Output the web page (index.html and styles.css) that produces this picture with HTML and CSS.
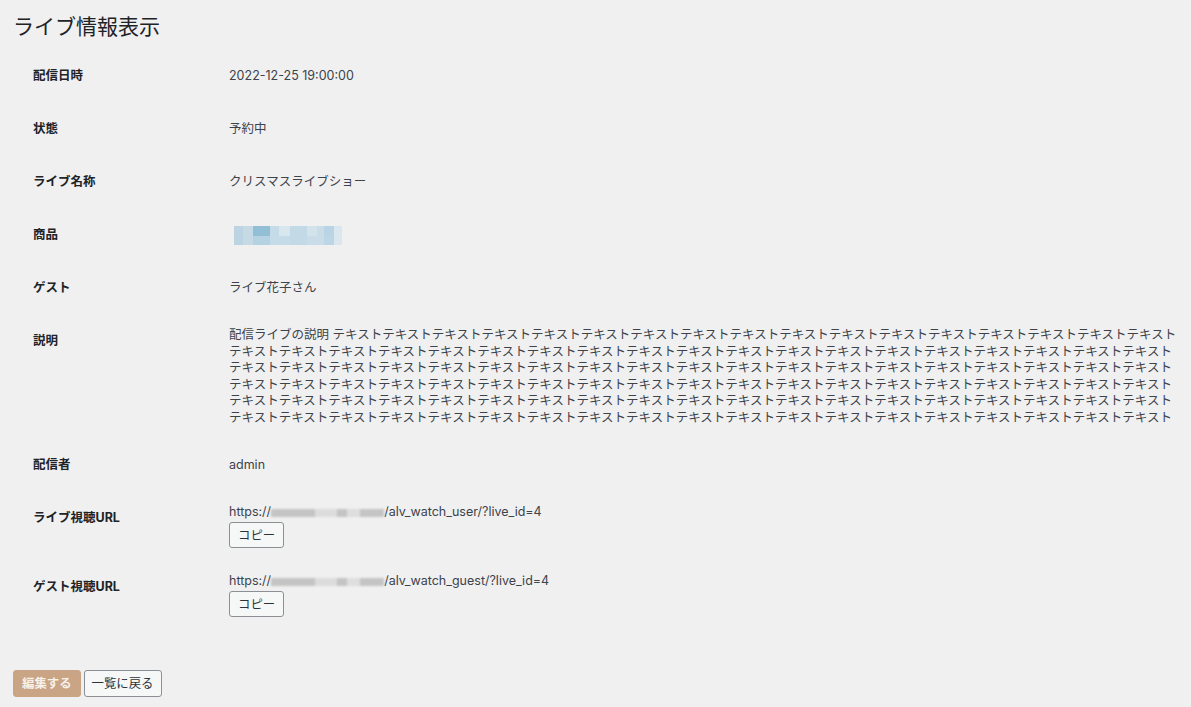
FILE: index.html
```html
<!DOCTYPE html>
<html lang="ja">
<head>
    <meta charset="UTF-8">
    <meta name="viewport" content="width=device-width, initial-scale=1.0">
    <title>ライブ情報表示</title>
    <link rel="stylesheet" href="styles.css">
</head>
<body>
    <div class="wrap">
        <h1>ライブ情報表示</h1>
        <table class="form-table">
            <tr>
                <th>配信日時</th>
                <td>2022-12-25 19:00:00</td>
            </tr>
            <tr>
                <th>状態</th>
                <td>予約中</td>
            </tr>
            <tr>
                <th>ライブ名称</th>
                <td>クリスマスライブショー</td>
            </tr>
            <tr>
                <th>商品</th>
                <td><span class="mosaic"><span class="mosaic-row top"></span><span class="mosaic-row bottom"></span></span></td>
            </tr>
            <tr>
                <th>ゲスト</th>
                <td>ライブ花子さん</td>
            </tr>
            <tr>
                <th>説明</th>
                <td><div class="desc" id="desc">配信ライブの説明 </div></td>
            </tr>
            <tr>
                <th>配信者</th>
                <td>admin</td>
            </tr>
            <tr>
                <th>ライブ視聴URL</th>
                <td>
                    <div class="url">https://<span class="blur"></span>/alv_watch_user/?live_id=4</div>
                    <button class="button">コピー</button>
                </td>
            </tr>
            <tr>
                <th>ゲスト視聴URL</th>
                <td>
                    <div class="url">https://<span class="blur"></span>/alv_watch_guest/?live_id=4</div>
                    <button class="button">コピー</button>
                </td>
            </tr>
        </table>
        <div class="actions">
            <button class="button button-primary">編集する</button>
            <button class="button">一覧に戻る</button>
        </div>
    </div>

    <script>
        // description placeholder text
        const desc = document.getElementById('desc');
        desc.textContent += 'テキスト'.repeat(112);
    </script>
</body>
</html>
```

FILE: styles.css
```css
body {
    margin: 0;
    background-color: #f0f0f1;
    color: #3c434a;
    font-family: Inter, "Noto Sans CJK JP", sans-serif;
    font-size: 12.5px;
}
.wrap {
    padding: 13px 0 0 13px;
}
h1 {
    margin: 0;
    font-size: 21px;
    font-weight: 400;
    line-height: 27px;
    color: #1d2327;
}
.form-table {
    margin-top: 10px;
    border-collapse: collapse;
    border-spacing: 0;
}
.form-table th {
    width: 176px;
    min-width: 176px;
    padding: 18.25px 10px 18.25px 20px;
    text-align: left;
    vertical-align: top;
    line-height: 16.5px;
    font-weight: 700;
    color: #1d2327;
}
.form-table td {
    padding: 12.25px 10px;
    vertical-align: middle;
    line-height: 16.5px;
}
.desc {
    width: 952px;
}
.mosaic {
    display: block;
    width: 108px;
    height: 19px;
    margin-left: 5px;
}
.mosaic-row {
    display: block;
    height: 50%;
}
.mosaic-row.top {
    background: linear-gradient(90deg,
        #bcd4e2 0 9px, #c6dae6 9px 19px, #93bfd6 19px 36px, #c6dbe8 36px 45px,
        #d8e6ee 45px 56px, #c3d9e6 56px 73px, #d3e3ec 73px 83px, #c9dce8 83px 90px,
        #b9d4e4 90px 100px, #dbe7ee 100px 108px);
}
.mosaic-row.bottom {
    background: linear-gradient(90deg,
        #bcd4e2 0 9px, #c6dae6 9px 19px, #b5d2e2 19px 36px, #c6dbe8 36px 45px,
        #c6dbe8 45px 56px, #c3d9e6 56px 73px, #c9dce8 73px 83px, #c9dce8 83px 90px,
        #bdd6e5 90px 100px, #dbe7ee 100px 108px);
}
.url {
    white-space: nowrap;
}
.blur {
    display: inline-block;
    width: 113px;
    height: 8px;
    vertical-align: -1px;
    background: linear-gradient(90deg,
        #c4c4c4 0 44px, #dcdcdc 44px 66px, #c4c4c4 66px 76px,
        #dedede 76px 89px, #c4c4c4 89px 113px);
    filter: blur(1px);
}
.button {
    display: inline-block;
    height: 26px;
    margin: 2px 0 0;
    padding: 0 8px;
    border: 1px solid #8c8f94;
    border-radius: 3px;
    background-color: #f6f7f7;
    color: #2c3338;
    font-family: inherit;
    font-size: 12.4px;
    cursor: pointer;
}
.form-table td .button {
    display: block;
}
.actions {
    display: flex;
    gap: 3px;
    margin-top: 38px;
}
.actions .button {
    height: 27px;
    padding: 0 7px;
}
.actions .button-primary {
    padding: 0 8px;
    background-color: #c9a485;
    border-color: #c9a485;
    color: #f7f1ea;
    font-weight: 700;
}
```
